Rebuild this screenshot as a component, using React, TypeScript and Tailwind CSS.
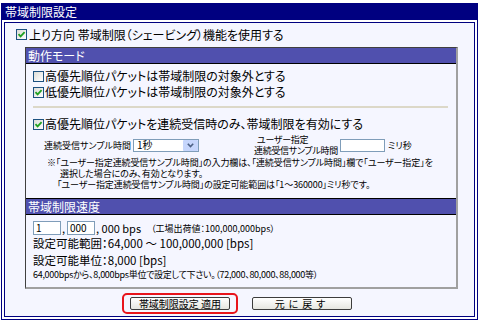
import React from "react";

function Check({ on }: { on?: boolean }) {
  return (
    <span className="inline-flex h-[11px] w-[11px] shrink-0 items-center justify-center border border-[#1c5180] bg-gradient-to-br from-[#dcdcd7] to-white">
      {on && (
        <svg width="9" height="9" viewBox="0 0 9 9">
          <path d="M1.5 4.2 L3.6 6.4 L7.6 2.2" stroke="#21a121" strokeWidth="1.8" fill="none" />
        </svg>
      )}
    </span>
  );
}

function CheckRow({ on, label }: { on?: boolean; label: string }) {
  return (
    <div className="flex h-[16px] items-center gap-[1px] whitespace-nowrap">
      <Check on={on} />
      <span>{label}</span>
    </div>
  );
}

function Btn({ children, wide }: { children: React.ReactNode; wide?: boolean }) {
  return (
    <div
      className={
        "flex h-[13px] w-[100px] items-center justify-center rounded-[2px] border border-[#3c3c3c] bg-gradient-to-b from-white to-[#e6e6e0] text-[10px] leading-none " +
        (wide ? "tracking-[4px]" : "")
      }
    >
      {children}
    </div>
  );
}

export default function App() {
  return (
    <div className="h-[324px] w-[481px] bg-white pl-[1px] pt-[3px] font-['Noto_Sans_CJK_JP',sans-serif] text-[12px] leading-none text-black [font-feature-settings:'palt']">
      <div className="w-[477px] border border-[#000080] bg-white">
        <div className="flex h-[16px] items-center bg-[#000080] pl-[3px] text-white">帯域制限設定</div>
        <div className="m-[2px] border border-[#000080] bg-[#f5f6ff] pb-[2px]">
          <div className="box-content flex h-[17px] items-center gap-[2px] whitespace-nowrap pl-[11px] pt-[3px]">
            <Check on />
            <span>上り方向 帯域制限（シェービング）機能を使用する</span>
          </div>

          <div className="ml-[20px] mt-[4px] w-[433px] border-b-2 border-l border-r-2 border-t border-b-[#a0a0a0] border-l-[#404040] border-r-[#a0a0a0] border-t-[#404040]">
            <div className="flex h-[16px] items-center border-b border-black bg-[#5050ae] pl-[2px] text-white">動作モード</div>
            <div className="flex flex-col pb-[8px] pl-[7px] pt-[4px]">
              <CheckRow label="高優先順位パケットは帯域制限の対象外とする" />
              <CheckRow on label="低優先順位パケットは帯域制限の対象外とする" />
              <div className="mr-[8px] mt-[6px] h-[2px] bg-[#dcd8c8]" />
              <div className="mt-[8px]">
                <CheckRow on label="高優先順位パケットを連続受信時のみ、帯域制限を有効にする" />
              </div>
              <div className="mt-[2px] flex h-[22px] items-center whitespace-nowrap pl-[11px] text-[9px]">
                <span className="w-[89px]">連続受信サンプル時間</span>
                <div className="flex h-[13px] w-[66px] items-center border border-[#7f9db9] bg-white">
                  <span className="flex-1 pl-[3px] text-[10px]">1秒</span>
                  <span className="flex h-[11px] w-[15px] items-center justify-center rounded-[1px] bg-[#c6d6fc]">
                    <svg width="7" height="5" viewBox="0 0 7 5">
                      <path d="M0.8 0.8 L3.5 3.6 L6.2 0.8" stroke="#4d6185" strokeWidth="1.6" fill="none" />
                    </svg>
                  </span>
                </div>
                <div className="ml-[55px] flex w-[86px] flex-col leading-[11px] tracking-[-0.3px]">
                  <span className="pl-[3px]">ユーザー指定</span>
                  <span>連続受信サンプル時間</span>
                </div>
                <div className="h-[13px] w-[45px] border border-[#7f9db9] bg-white" />
                <span className="ml-[3px]">ミリ秒</span>
              </div>
              <div className="mt-[1px] flex flex-col whitespace-nowrap text-[9px] leading-[11px] tracking-[-0.1px]">
                <span className="pl-[14px]">※「ユーザー指定連続受信サンプル時間」の入力欄は、「連続受信サンプル時間」欄で「ユーザー指定」を</span>
                <span className="pl-[27px]">選択した場合にのみ、有効となります。</span>
                <span className="pl-[24px]">「ユーザー指定連続受信サンプル時間」の設定可能範囲は「1～360000」ミリ秒です。</span>
              </div>
            </div>

            <div className="flex h-[17px] items-center border-y border-black bg-[#5050ae] pl-[2px] text-white">帯域制限速度</div>
            <div className="flex flex-col whitespace-nowrap pb-[7px] pl-[7px] pt-[6px]">
              <div className="flex h-[14px] items-center text-[11px]">
                <div className="flex h-[14px] w-[28px] items-center border border-[#7f9db9] bg-white pl-[2px] text-[10px]">1</div>
                <span className="w-[6px] pl-[1px]">,</span>
                <div className="flex h-[14px] w-[28px] items-center border border-[#7f9db9] bg-white pl-[2px] text-[10px]">000</div>
                <span className="pl-[1px]">, 000 bps</span>
                <span className="ml-[10px] text-[9px]">（工場出荷値：100,000,000bps）</span>
              </div>
              <div className="flex h-[17px] items-center text-[11.5px]">設定可能範囲：64,000 ～ 100,000,000 [bps]</div>
              <div className="flex h-[17px] items-center text-[11.5px]">設定可能単位：8,000 [bps]</div>
              <div className="flex h-[11px] items-center text-[9px] tracking-[-0.3px]">64,000bpsから、8,000bps単位で設定して下さい。（72,000、80,000、88,000等）</div>
            </div>
          </div>

          <div className="mt-[4px] flex items-center pl-[117px]">
            <div className="flex h-[21px] w-[116px] items-center justify-center rounded-[5px] border-2 border-[#e8141c]">
              <Btn>帯域制限設定 適用</Btn>
            </div>
            <div className="ml-[14px]">
              <Btn wide>元に戻す</Btn>
            </div>
          </div>
        </div>
      </div>
    </div>
  );
}
